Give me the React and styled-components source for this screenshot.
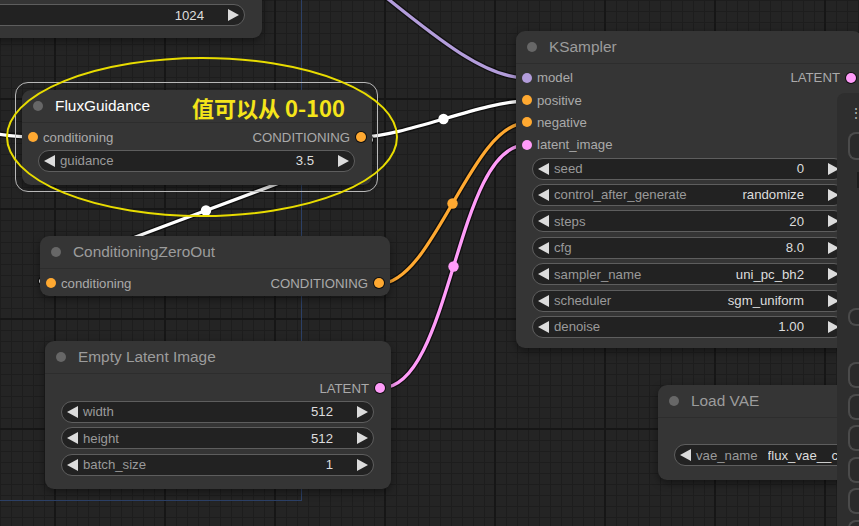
import React from 'react';
import styled, { createGlobalStyle } from 'styled-components';

const GlobalStyle = createGlobalStyle`
  html, body { margin: 0; padding: 0; background: #232323; }
  body { font-family: "Liberation Sans", Arial, sans-serif; }
`;

const Canvas = styled.div`
  position: relative;
  width: 859px;
  height: 526px;
  overflow: hidden;
  background-color: #242424;
  background-image:
    linear-gradient(to right, #161616 2px, transparent 2px),
    linear-gradient(to bottom, #161616 2px, transparent 2px),
    linear-gradient(to right, #1d1d1d 1px, transparent 1px),
    linear-gradient(to bottom, #1d1d1d 1px, transparent 1px);
  background-size: 110px 110px, 110px 110px, 11px 11px, 11px 11px;
  background-position: 54px 0, 0 98px, 0 0, 0 0;
`;

const GroupFrame = styled.div`
  position: absolute;
  left: -20px;
  top: -20px;
  width: 322px;
  height: 521px;
  box-sizing: border-box;
  border: 1px solid #2c4066;
`;

const WireLayer = styled.svg`
  position: absolute;
  inset: 0;
  width: 859px;
  height: 526px;
  overflow: visible;
`;

const NodeBox = styled.div`
  position: absolute;
  box-sizing: border-box;
  background: #353535;
  border-radius: 9px;
  box-shadow: 0 3px 8px rgba(0, 0, 0, 0.45);
  display: flex;
  flex-direction: column;
  &::after {
    content: '';
    display: ${p => (p.$selected ? 'block' : 'none')};
    position: absolute;
    inset: -8px -6px -7px -7px;
    border: 1px solid #b8b8b8;
    border-radius: 13px;
    pointer-events: none;
  }
`;

const TitleBar = styled.div`
  height: 33px;
  flex: none;
  box-sizing: border-box;
  display: flex;
  align-items: center;
  padding-left: 11px;
  border-bottom: 1px solid #2d2d2d;
  font-size: 15.4px;
  color: ${p => (p.$selected ? '#ffffff' : '#9c9c9c')};
  white-space: nowrap;
`;

const TitleDot = styled.span`
  width: 10px;
  height: 10px;
  border-radius: 50%;
  background: #676767;
  margin-right: 12px;
  flex: none;
`;

const Body = styled.div`
  flex: 1;
  display: flex;
  flex-direction: column;
  padding: 3px 0 0;
  justify-content: ${p => (p.$bottom ? 'flex-end' : 'flex-start')};
  padding-bottom: ${p => (p.$bottom ? '12px' : '0')};
`;

const SlotRow = styled.div`
  height: 22.4px;
  display: flex;
  align-items: center;
  justify-content: space-between;
  padding: 0 6px;
  font-size: 13.2px;
  color: #aaaaaa;
  white-space: nowrap;
`;

const SlotSide = styled.div`
  display: flex;
  align-items: center;
  gap: ${p => (p.$out ? '6px' : '5px')};
  margin-left: ${p => (p.$out ? 'auto' : '0')};
`;

const SlotDot = styled.span`
  width: 10px;
  height: 10px;
  border-radius: 50%;
  background: ${p => p.$color};
  box-shadow: ${p => (p.$out ? '0 0 0 1px #101010' : 'none')};
  flex: none;
`;

const Widgets = styled.div`
  display: flex;
  flex-direction: column;
  gap: 4.4px;
  padding: 1.5px 17px 0 16px;
`;

const WidgetPill = styled.div`
  height: 22px;
  box-sizing: border-box;
  display: flex;
  align-items: center;
  border: 1px solid #5e5e5e;
  border-radius: 11px;
  background: #222222;
  padding: 0 5px;
  font-size: 13.2px;
  white-space: nowrap;
  overflow: hidden;
`;

const Arrow = styled.span`
  width: 0;
  height: 0;
  flex: none;
  border-top: 6px solid transparent;
  border-bottom: 6px solid transparent;
  ${p => (p.$dir === 'left' ? 'border-right: 11px solid #dcdcdc;' : 'border-left: 11px solid #dcdcdc;')}
`;

const WLabel = styled.span`
  color: #9a9a9a;
  margin-left: 5px;
  flex: ${p => (p.$fixed ? 'none' : '1')};
`;

const WValue = styled.span`
  color: #dddddd;
  margin-right: 24px;
  ${p => (p.$truncate ? 'flex: 1; margin-left: 10px; overflow: hidden;' : '')}
`;

const SidePanel = styled.div`
  position: absolute;
  left: 837px;
  top: 93px;
  width: 40px;
  height: 450px;
  box-sizing: border-box;
  background: #2e2e2e;
  border-top-left-radius: 8px;
  display: flex;
  flex-direction: column;
  padding: 13px 0 0 11px;
`;

const Kebab = styled.div`
  font-size: 14px;
  line-height: 14px;
  height: 14px;
  color: #b0b0b0;
  padding-left: 1px;
`;

const PanelItem = styled.div`
  flex: none;
  margin-top: ${p => p.$mt}px;
  margin-left: ${p => p.$ml || 0}px;
  height: ${p => p.$h}px;
  box-sizing: border-box;
  border-radius: ${p => (p.$strip ? '0' : '8px')};
  background: ${p => (p.$strip ? '#1d1d1d' : '#2a2a2a')};
  border: ${p => (p.$strip ? 'none' : '2px solid #4b4b4b')};
  border-right: none;
`;

const Ellipse = styled.svg`
  position: absolute;
  left: 0;
  top: 0;
  width: 859px;
  height: 526px;
  pointer-events: none;
`;

const Note = styled.div`
  position: absolute;
  left: 192px;
  top: 95px;
  font-family: "Noto Sans CJK SC", "Noto Sans", sans-serif;
  font-weight: 700;
  font-size: 22px;
  line-height: 24px;
  color: #f5e51a;
  white-space: nowrap;
`;

const C = {
  cond: '#ffa931',
  latent: '#ff9cf9',
  model: '#b39ddb',
  white: '#ffffff',
};

function bez(x1, y1, x2, y2) {
  const d = Math.hypot(x2 - x1, y2 - y1) * 0.25;
  const p = [x1, y1, x1 + d, y1, x2 - d, y2, x2, y2];
  const mx = 0.125 * p[0] + 0.375 * p[2] + 0.375 * p[4] + 0.125 * p[6];
  const my = 0.125 * p[1] + 0.375 * p[3] + 0.375 * p[5] + 0.125 * p[7];
  return { d: `M${p[0]} ${p[1]} C${p[2]} ${p[3]} ${p[4]} ${p[5]} ${p[6]} ${p[7]}`, mx, my };
}

const links = [
  { from: [250, -80], to: [526, 78], color: C.model, dot: false },
  { from: [-200, 100], to: [33, 137], color: C.white, dot: false },
  { from: [361, 137], to: [526, 101], color: C.white, dot: true },
  { from: [361, 137], to: [51, 284], color: C.white, dot: true },
  { from: [379, 284], to: [526, 123], color: C.cond, dot: true },
  { from: [381, 388], to: [526, 145], color: C.latent, dot: true },
];

function Wires() {
  return (
    <WireLayer>
      {links.map((l, i) => {
        const b = bez(l.from[0], l.from[1], l.to[0], l.to[1]);
        return (
          <g key={i}>
            <path d={b.d} fill="none" stroke="rgba(0,0,0,0.55)" strokeWidth="6" />
            <path d={b.d} fill="none" stroke={l.color} strokeWidth="3.3" />
            {l.dot && <circle cx={b.mx} cy={b.my} r="5.2" fill={l.color} />}
          </g>
        );
      })}
    </WireLayer>
  );
}

function Widget({ label, value, truncate }) {
  return (
    <WidgetPill>
      <Arrow $dir="left" />
      <WLabel $fixed={truncate}>{label}</WLabel>
      <WValue $truncate={truncate}>{value}</WValue>
      {!truncate && <Arrow $dir="right" />}
    </WidgetPill>
  );
}

function Slot({ input, output }) {
  return (
    <SlotRow>
      {input && (
        <SlotSide>
          <SlotDot $color={input.color} />
          <span>{input.name}</span>
        </SlotSide>
      )}
      {output && (
        <SlotSide $out>
          <span>{output.name}</span>
          <SlotDot $color={output.color} $out />
        </SlotSide>
      )}
    </SlotRow>
  );
}

function Node({ x, y, w, h, title, selected, slots = [], widgets = [], bottom }) {
  return (
    <NodeBox $selected={selected} style={{ left: x, top: y, width: w, height: h }}>
      <TitleBar $selected={selected}>
        <TitleDot />
        {title}
      </TitleBar>
      <Body $bottom={bottom}>
        {slots.map((s, i) => (
          <Slot key={i} input={s.in} output={s.out} />
        ))}
        {widgets.length > 0 && (
          <Widgets>
            {widgets.map((wd, i) => (
              <Widget key={i} label={wd[0]} value={wd[1]} truncate={wd[2]} />
            ))}
          </Widgets>
        )}
      </Body>
    </NodeBox>
  );
}

const panelItems = [
  { mt: 12, h: 28 },
  { mt: 12, h: 16, ml: 9, strip: true },
  { mt: 120, h: 18 },
  { mt: 36, h: 26 },
  { mt: 5.5, h: 26 },
  { mt: 5.5, h: 26 },
  { mt: 5.5, h: 26 },
  { mt: 5.5, h: 26 },
  { mt: 5.5, h: 26 },
];

export default function App() {
  return (
    <>
      <GlobalStyle />
      <Canvas>
        <GroupFrame />
        <Wires />
        <Node
          x={-160}
          y={-70}
          w={422}
          h={108}
          title="EmptySD3LatentImage"
          bottom
          widgets={[['height', '1024']]}
        />
        <Node
          x={22}
          y={90}
          w={350}
          h={95}
          title="FluxGuidance"
          selected
          slots={[{ in: { name: 'conditioning', color: C.cond }, out: { name: 'CONDITIONING', color: C.cond } }]}
          widgets={[['guidance', '3.5']]}
        />
        <Node
          x={40}
          y={236}
          w={350}
          h={60}
          title="ConditioningZeroOut"
          slots={[{ in: { name: 'conditioning', color: C.cond }, out: { name: 'CONDITIONING', color: C.cond } }]}
        />
        <Node
          x={45}
          y={341}
          w={346}
          h={148}
          title="Empty Latent Image"
          slots={[{ out: { name: 'LATENT', color: C.latent } }]}
          widgets={[
            ['width', '512'],
            ['height', '512'],
            ['batch_size', '1'],
          ]}
        />
        <Node
          x={516}
          y={30.5}
          w={346}
          h={317.5}
          title="KSampler"
          slots={[
            { in: { name: 'model', color: C.model }, out: { name: 'LATENT', color: C.latent } },
            { in: { name: 'positive', color: C.cond } },
            { in: { name: 'negative', color: C.cond } },
            { in: { name: 'latent_image', color: C.latent } },
          ]}
          widgets={[
            ['seed', '0'],
            ['control_after_generate', 'randomize'],
            ['steps', '20'],
            ['cfg', '8.0'],
            ['sampler_name', 'uni_pc_bh2'],
            ['scheduler', 'sgm_uniform'],
            ['denoise', '1.00'],
          ]}
        />
        <Node
          x={658}
          y={384.5}
          w={300}
          h={95.5}
          title="Load VAE"
          slots={[{ out: { name: 'VAE', color: '#ff6e6e' } }]}
          widgets={[['vae_name', 'flux_vae__comfy.safetensors', true]]}
        />
        <SidePanel>
          <Kebab>⋮</Kebab>
          {panelItems.map((p, i) => (
            <PanelItem key={i} $mt={p.mt} $h={p.h} $ml={p.ml} $strip={p.strip} />
          ))}
        </SidePanel>
        <Ellipse>
          <ellipse cx="202" cy="137" rx="195" ry="79" fill="none" stroke="#e8dc00" strokeWidth="2" />
        </Ellipse>
        <Note>值可以从 0-100</Note>
      </Canvas>
    </>
  );
}
